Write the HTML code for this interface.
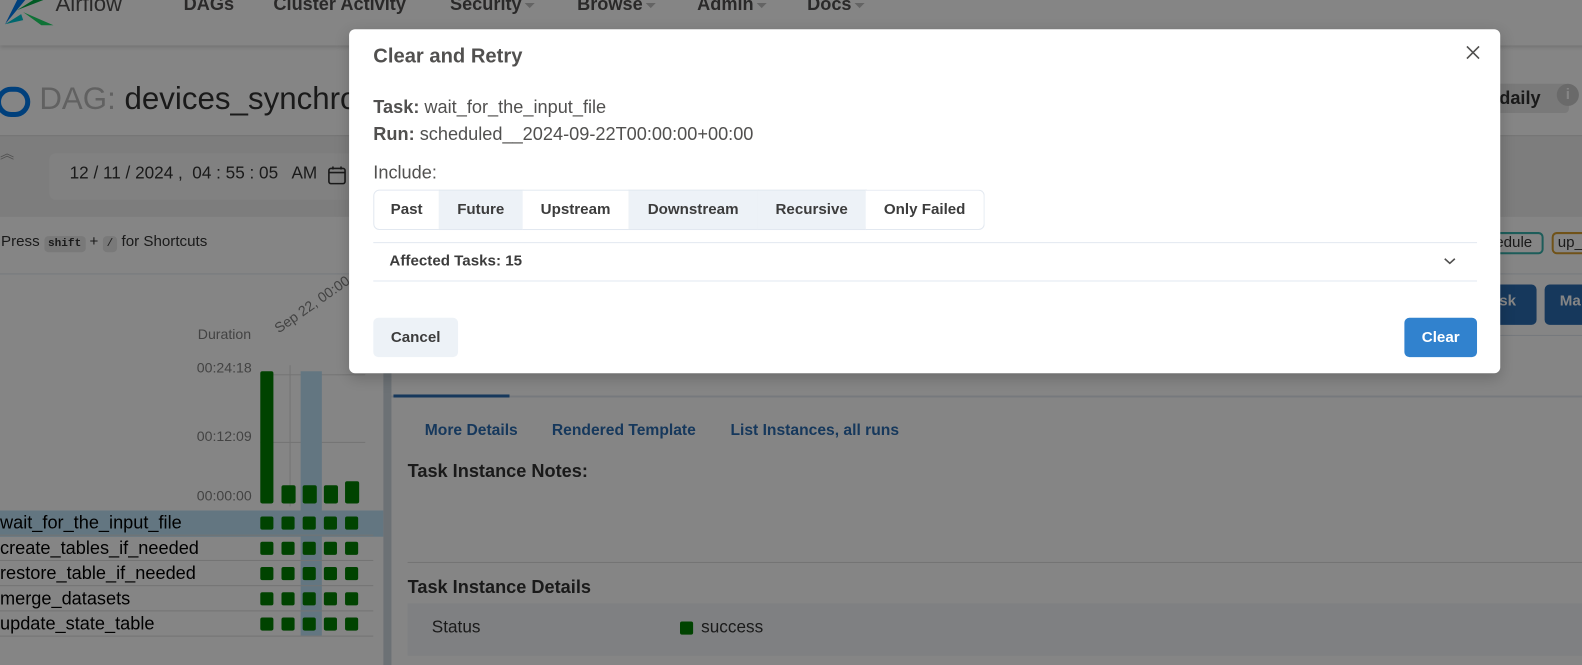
<!DOCTYPE html>
<html><head><meta charset="utf-8">
<style>
*{box-sizing:border-box;margin:0;padding:0}
html,body{width:1582px;height:665px;overflow:hidden}
body{position:relative;background:#fff;font-family:"Liberation Sans",sans-serif;color:#51504f}
#wrap{position:absolute;left:0;top:0;width:1568px;height:660px;transform:scale(1.0089);transform-origin:0 0}
.a{position:absolute;white-space:nowrap}
.nav{font-weight:bold;font-size:18px;color:#51504f;top:-6px}
.caret{display:inline-block;width:0;height:0;border-left:5px solid transparent;border-right:5px solid transparent;border-top:5px solid #c0c0c0;margin-left:3px;vertical-align:middle}
.sq{position:absolute;width:13px;height:13px;background:#008000;border-radius:2px}
.row{position:absolute;left:0;font-size:18px;color:#000;height:25px;line-height:25px;width:370px;border-bottom:1px solid #ddd}
.lbl{position:absolute;font-size:14px;color:#808080}
#ov{position:absolute;left:0;top:0;width:1600px;height:680px;background:rgba(0,0,0,0.48)}
.modal{position:absolute;left:346px;top:29px;width:1141px;height:341px;background:#fff;border-radius:6px;box-shadow:0 5px 15px rgba(0,0,0,.2)}
.bg{position:absolute;top:159px;height:40px;font-weight:bold;font-size:15px;color:#3c3c3c;line-height:38px;text-align:center;border-right:1px solid #e2e8f0;border-top:1px solid #e2e8f0;border-bottom:1px solid #e2e8f0}
</style></head><body>
<div id="wrap">
<div class="a" style="left:0;top:0;width:1600px;height:45px;background:#fff;box-shadow:0 2px 4px rgba(0,0,0,.15)"></div>
<svg class="a" style="left:3px;top:0" width="50" height="26" viewBox="0 0 50 26"><path d="M2 24 L14 0 L22 0 Z" fill="#017cee"/><path d="M14 10 L30 0 L40 0 Z" fill="#00ad46"/><path d="M20 12 L50 25 L38 25 Z" fill="#04d659" opacity=".9"/><path d="M2 24 L18 14 L20 20 Z" fill="#00c7d4"/></svg>
<div class="a nav" style="left:55px;font-weight:normal;font-size:22px;top:-9px">Airflow</div>
<div class="a nav" style="left:182px">DAGs</div>
<div class="a nav" style="left:271px">Cluster Activity</div>
<div class="a nav" style="left:446px">Security<span class="caret"></span></div>
<div class="a nav" style="left:572px">Browse<span class="caret"></span></div>
<div class="a nav" style="left:691px">Admin<span class="caret"></span></div>
<div class="a nav" style="left:800px">Docs<span class="caret"></span></div>

<div class="a" style="left:-4px;top:86px;width:34px;height:30px;border:5px solid #017cee;border-radius:15px;background:#fff"></div>
<div class="a" style="left:39px;top:80px;font-size:31px;color:#bbb">DAG: <span style="color:#333">devices_synchronization</span></div>
<div class="a" style="left:1478px;top:83px;width:77px;height:29px;background:#e8e8e8;border-radius:4px;font-weight:bold;font-size:18px;color:#333;padding:4px 0 0 8px">daily</div>
<div class="a" style="left:1543px;top:83px;width:22px;height:22px;border-radius:50%;background:#ccc;color:#fff;font-weight:bold;font-size:15px;text-align:center;line-height:22px">i</div>

<div class="a" style="left:0;top:134px;width:1600px;height:81px;background:#f0f0f0;border-top:1px solid #ddd"></div>
<div class="a" style="left:0;top:142px;font-size:14px;color:#999">︽</div>
<div class="a" style="left:49px;top:152px;width:310px;height:46px;background:#f7f7f7;border-radius:6px"></div>
<div class="a" style="left:69px;top:162px;font-size:17px;color:#333">12 / 11 / 2024 ,&nbsp; 04 : 55 : 05 &nbsp; AM</div>
<svg class="a" style="left:325px;top:164px" width="18" height="19" viewBox="0 0 18 19"><rect x="1" y="3" width="16" height="15" rx="2" fill="none" stroke="#333" stroke-width="1.6"/><line x1="1" y1="7" x2="17" y2="7" stroke="#333" stroke-width="1.6"/><line x1="5" y1="1" x2="5" y2="4" stroke="#333" stroke-width="1.6"/><line x1="13" y1="1" x2="13" y2="4" stroke="#333" stroke-width="1.6"/></svg>

<div class="a" style="left:1px;top:231px;font-size:15px;color:#333">Press <span style="background:#e8e8e8;border-radius:4px;font-family:'Liberation Mono';font-size:11px;font-weight:bold;padding:2px 4px">shift</span> + <span style="background:#e8e8e8;border-radius:4px;font-family:'Liberation Mono';font-size:11px;padding:2px 4px">/</span> for Shortcuts</div>
<div class="a" style="left:1470px;top:230px;width:60px;height:22px;border:2px solid #38b2ac;border-radius:5px;font-size:15px;padding-left:10px;color:#333;line-height:18px">edule</div>
<div class="a" style="left:1538px;top:230px;width:60px;height:22px;border:2px solid #d69e2e;border-radius:5px;font-size:15px;padding-left:4px;color:#333;line-height:18px">up_</div>
<div class="a" style="left:0;top:271px;width:1600px;height:1px;background:#e2e8f0"></div>
<div class="a" style="left:1440px;top:282px;width:83px;height:40px;background:#2b6cb0;border-radius:5px;color:#fff;font-weight:bold;font-size:15px;padding:8px 0 0 46px">sk</div>
<div class="a" style="left:1531px;top:282px;width:70px;height:40px;background:#2b6cb0;border-radius:5px;color:#fff;font-weight:bold;font-size:15px;padding:8px 0 0 15px">Ma</div>
<div class="a" style="left:388px;top:332px;width:1200px;height:1px;background:#e2e8f0"></div>

<div class="lbl" style="left:196px;top:323px">Duration</div>
<div class="lbl" style="left:278px;top:317px;transform:rotate(-35deg);transform-origin:left bottom">Sep 22, 00:00</div>
<div class="lbl" style="left:195px;top:356px">00:24:18</div>
<div class="lbl" style="left:195px;top:424px">00:12:09</div>
<div class="lbl" style="left:195px;top:483px">00:00:00</div>
<div class="a" style="left:258px;top:371px;width:104px;height:1px;background:#ddd"></div>
<div class="a" style="left:258px;top:438px;width:104px;height:1px;background:#ddd"></div>
<div class="a" style="left:287px;top:362px;width:1px;height:140px;background:#ddd"></div>
<div class="a" style="left:298px;top:368px;width:21px;height:262px;background:#bee3f8"></div>
<div class="a" style="left:0;top:506px;width:380px;height:26px;background:#bee3f8"></div>
<div class="a" style="left:258px;top:368px;width:13px;height:131px;background:#008000;border-radius:2px"></div>
<div class="a" style="left:279px;top:481px;width:14px;height:18px;background:#008000;border-radius:2px"></div>
<div class="a" style="left:300px;top:481px;width:14px;height:18px;background:#008000;border-radius:2px"></div>
<div class="a" style="left:321px;top:481px;width:14px;height:18px;background:#008000;border-radius:2px"></div>
<div class="a" style="left:342px;top:477px;width:14px;height:22px;background:#008000;border-radius:2px"></div>
<div class="row" style="top:506px">wait_for_the_input_file</div>
<div class="row" style="top:531px">create_tables_if_needed</div>
<div class="row" style="top:556px">restore_table_if_needed</div>
<div class="row" style="top:581px">merge_datasets</div>
<div class="row" style="top:606px">update_state_table</div>
<div id="sq"></div>
<script>
var ys=[512,537,562,587,612],xs=[258,279,300,321,342],h='';
ys.forEach(function(y){xs.forEach(function(x){h+='<div class="sq" style="left:'+x+'px;top:'+y+'px"></div>'})});
document.getElementById('sq').innerHTML=h;
</script>
<div class="a" style="left:380px;top:332px;width:8px;height:340px;background:#cfd8e0"></div>

<div class="a" style="left:388px;top:392px;width:1200px;height:2px;background:#e2e8f0"></div>
<div class="a" style="left:390px;top:391px;width:115px;height:3px;background:#2b6cb0"></div>
<div class="a" style="left:421px;top:418px;font-weight:bold;font-size:15.5px;color:#2b6cb0">More Details</div>
<div class="a" style="left:547px;top:418px;font-weight:bold;font-size:15.5px;color:#2b6cb0">Rendered Template</div>
<div class="a" style="left:724px;top:418px;font-weight:bold;font-size:15.5px;color:#2b6cb0">List Instances, all runs</div>
<div class="a" style="left:404px;top:457px;font-weight:bold;font-size:18px;color:#333">Task Instance Notes:</div>
<div class="a" style="left:404px;top:557px;width:1200px;height:1px;background:#ddd"></div>
<div class="a" style="left:404px;top:572px;font-weight:bold;font-size:18px;color:#333">Task Instance Details</div>
<div class="a" style="left:404px;top:598px;width:1200px;height:52px;background:#f4f6fa"></div>
<div class="a" style="left:428px;top:612px;font-size:17px;color:#333">Status</div>
<div class="a" style="left:674px;top:616px;width:13px;height:13px;background:#008000;border-radius:2px"></div>
<div class="a" style="left:695px;top:612px;font-size:17px;color:#333">success</div>

<div id="ov"></div>

<div class="modal">
 <div class="a" style="left:24px;top:16px;font-weight:bold;font-size:20px">Clear and Retry</div>
 <svg class="a" style="left:1107px;top:16px" width="14" height="14" viewBox="0 0 14 14"><path d="M1 1L13 13M13 1L1 13" stroke="#51504f" stroke-width="1.6"/></svg>
 <div class="a" style="left:24px;top:67px;font-size:18px"><b>Task:</b> wait_for_the_input_file</div>
 <div class="a" style="left:24px;top:94px;font-size:18px"><b>Run:</b> scheduled__2024-09-22T00:00:00+00:00</div>
 <div class="a" style="left:24px;top:132px;font-size:18px">Include:</div>
 <div class="bg" style="left:24px;width:66px;background:#fff;border-radius:6px 0 0 6px;border-left:1px solid #e2e8f0">Past</div>
 <div class="bg" style="left:89px;width:84px;background:#edf2f7">Future</div>
 <div class="bg" style="left:172px;width:106px;background:#fff">Upstream</div>
 <div class="bg" style="left:277px;width:129px;background:#edf2f7">Downstream</div>
 <div class="bg" style="left:405px;width:108px;background:#edf2f7">Recursive</div>
 <div class="bg" style="left:512px;width:118px;background:#fff;border-radius:0 6px 6px 0">Only Failed</div>
 <div class="a" style="left:24px;top:211px;width:1094px;height:1px;background:#e2e8f0"></div>
 <div class="a" style="left:40px;top:221px;font-weight:bold;font-size:15px;color:#3c3c3c">Affected Tasks: 15</div>
 <svg class="a" style="left:1085px;top:226px" width="12" height="8" viewBox="0 0 12 8"><path d="M1 1.5L6 6L11 1.5" fill="none" stroke="#51504f" stroke-width="1.6"/></svg>
 <div class="a" style="left:24px;top:249px;width:1094px;height:1px;background:#e2e8f0"></div>
 <div class="a" style="left:24px;top:286px;width:84px;height:39px;background:#edf2f7;border-radius:5px;font-weight:bold;font-size:15px;color:#3c3c3c;text-align:center;line-height:39px">Cancel</div>
 <div class="a" style="left:1046px;top:286px;width:72px;height:39px;background:#3182ce;border-radius:5px;font-weight:bold;font-size:15px;color:#fff;text-align:center;line-height:39px">Clear</div>
</div>
</div>
</body></html>
